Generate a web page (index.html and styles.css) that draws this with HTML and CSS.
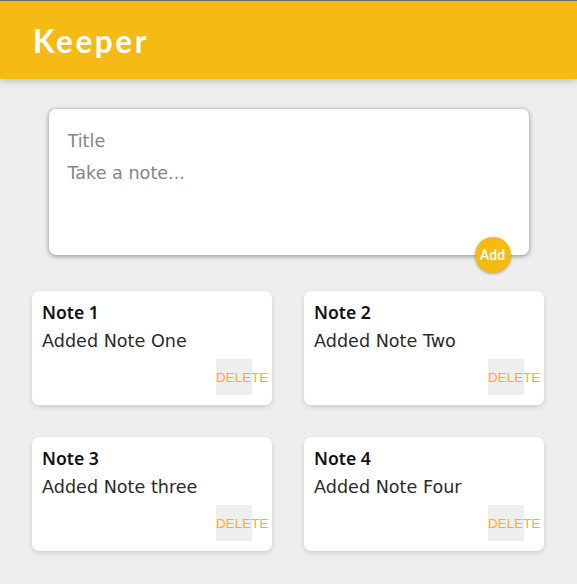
FILE: index.html
```html
<!DOCTYPE html>
<html lang="en">
<head>
<meta charset="utf-8">
<title>Keeper</title>
<link rel="stylesheet" href="styles.css">
</head>
<body>
<header class="app-header">
  <h1 class="logo">Keeper</h1>
</header>
<form class="create-note">
  <input class="create-title" name="title" placeholder="Title">
  <textarea class="create-content" name="content" placeholder="Take a note..." rows="3"></textarea>
  <button class="add-btn" type="button">Add</button>
</form>
<main class="notes">
  <div class="note">
    <h2 class="note-title">Note 1</h2>
    <p class="note-text">Added Note One</p>
    <button class="delete-btn" type="button">DELETE</button>
  </div>
  <div class="note">
    <h2 class="note-title">Note 2</h2>
    <p class="note-text">Added Note Two</p>
    <button class="delete-btn" type="button">DELETE</button>
  </div>
  <div class="note">
    <h2 class="note-title">Note 3</h2>
    <p class="note-text">Added Note three</p>
    <button class="delete-btn" type="button">DELETE</button>
  </div>
  <div class="note">
    <h2 class="note-title">Note 4</h2>
    <p class="note-text">Added Note Four</p>
    <button class="delete-btn" type="button">DELETE</button>
  </div>
</main>
</body>
</html>
```
FILE: styles.css
```css
* { box-sizing: border-box; }
html, body { margin: 0; padding: 0; }
body {
  background: #eeeeee;
  font-family: "DejaVu Sans", sans-serif;
  min-height: 584px;
}
.app-header {
  background: #f5ba13;
  border-top: 1px solid #6b6b6b;
  height: 79px;
  padding: 4px 33px 0;
  display: flex;
  align-items: center;
  box-shadow: 0 0 10px 0 rgba(0, 0, 0, 0.3);
  position: relative;
}
.logo {
  margin: 0;
  color: #fff;
  font-family: "Lato", sans-serif;
  font-weight: 700;
  font-size: 31.5px;
  letter-spacing: 2.6px;
  line-height: 1;
}
.create-note {
  position: relative;
  width: 480px;
  margin: 30px auto 20px;
  background: #fff;
  padding: 15px;
  border-radius: 7px;
  box-shadow: 0 1px 5px rgb(138, 137, 137);
}
.create-title, .create-content {
  display: block;
  width: 100%;
  border: none;
  padding: 4px;
  outline: none;
  font-size: 17.6px;
  font-family: "DejaVu Sans", sans-serif;
  resize: none;
  color: #333;
}
.create-title { height: 34px; }
.create-content { height: 82px; line-height: 22px; }
.create-title::placeholder, .create-content::placeholder { color: #858585; }
.add-btn {
  position: absolute;
  right: 18px;
  bottom: -18px;
  width: 36px;
  height: 36px;
  border-radius: 50%;
  border: none;
  background: #f5ba13;
  color: #fff;
  font-family: "Roboto", sans-serif;
  font-weight: 500;
  font-size: 14px;
  padding: 0;
  box-shadow: 0 1px 3px rgba(0, 0, 0, 0.3);
}
.notes {
  display: flex;
  flex-wrap: wrap;
  padding: 0 16px;
}
.note {
  width: 240px;
  margin: 16px;
  padding: 10px;
  background: #fff;
  border-radius: 7px;
  box-shadow: 0 2px 5px #ccc;
  display: flex;
  flex-direction: column;
}
.note-title {
  margin: 0 0 7px;
  font-family: "Noto Sans", sans-serif;
  font-size: 17.6px;
  font-weight: 600;
  line-height: 22px;
  color: #111;
}
.note-text {
  margin: 0 0 7px;
  font-size: 17.6px;
  line-height: 22px;
  color: #2a2a2a;
}
.delete-btn {
  align-self: flex-end;
  margin-right: 10px;
  width: 36px;
  height: 36px;
  padding: 0;
  border: none;
  background: #eeeeee;
  color: #f5b511;
  font-family: "Liberation Sans", sans-serif;
  font-size: 13.5px;
  text-align: left;
  white-space: nowrap;
  overflow: visible;
}
```
